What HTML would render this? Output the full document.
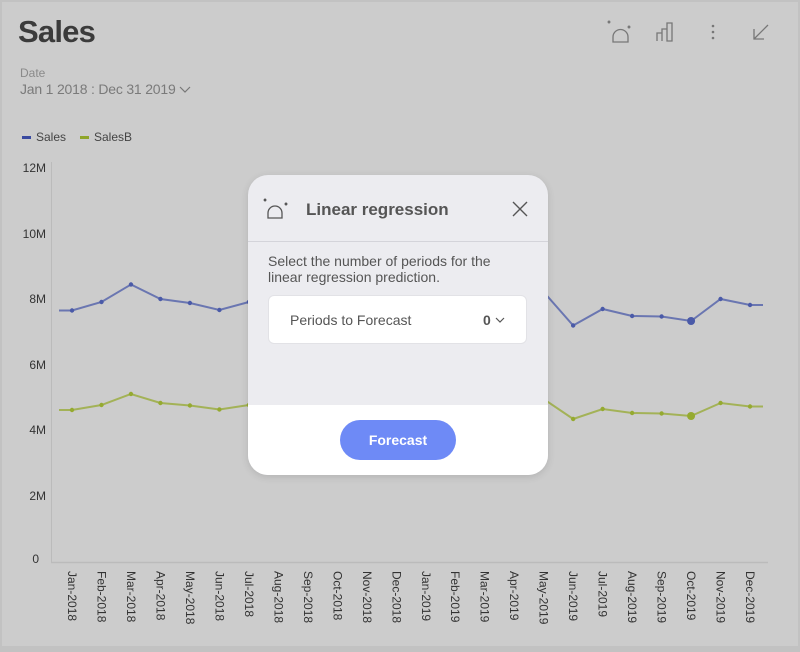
<!DOCTYPE html>
<html><head><meta charset="utf-8"><style>
*{margin:0;padding:0;box-sizing:border-box}
body{width:800px;height:652px;overflow:hidden;background:#cccccc;font-family:"Liberation Sans",Arial,sans-serif;position:relative}
.frame{position:absolute;left:0;top:0;width:800px;height:652px;border:2px solid #c2c2c2;border-bottom-width:6px}
h1{position:absolute;left:18px;top:14px;font-size:31px;font-weight:bold;color:#3b3b3b;letter-spacing:-0.8px}
.dl{position:absolute;left:20px;top:66px;font-size:12px;color:#8a8a8a}
.dv{position:absolute;left:20px;top:81px;font-size:14px;color:#7a7a7a;letter-spacing:-0.2px}
.leg{position:absolute;top:130px;font-size:12px;color:#444}
.dlg{position:absolute;left:248px;top:175px;width:300px;height:300px;border-radius:20px;overflow:hidden;background:#ececf0;box-shadow:0 2px 8px rgba(0,0,0,.12)}
.hd{height:67px;border-bottom:1px solid #d4d4da;position:relative}
.ttl{position:absolute;left:58px;top:25px;font-size:17px;font-weight:bold;color:#555}
.desc{position:absolute;left:20px;top:78px;font-size:14px;color:#555;line-height:16px}
.box{position:absolute;left:20px;top:120px;width:259px;height:49px;background:#fff;border-radius:6px;border:1px solid #e2e2e6}
.box span{position:absolute;top:16px;font-size:14px;color:#555}
.bot{position:absolute;left:0;top:230px;width:300px;height:70px;background:#fff}
.btn{position:absolute;left:92px;top:15px;width:116px;height:40px;border-radius:20px;background:#6e8af6;color:#fff;font-weight:bold;font-size:14px;text-align:center;line-height:40px}
</style></head><body>
<div class="frame"></div>
<h1>Sales</h1>
<div class="dl">Date</div>
<div class="dv">Jan 1 2018 : Dec 31 2019 <svg width="12" height="8" viewBox="0 0 12 8"><path d="M1 1l5 5 5-5" fill="none" stroke="#777" stroke-width="1.2"/></svg></div>
<div class="leg" style="left:22px"><span style="display:inline-block;width:9px;height:3px;background:#3a4aa0;vertical-align:middle;margin-right:5px"></span>Sales</div>
<div class="leg" style="left:80px"><span style="display:inline-block;width:9px;height:3px;background:#8fa52a;vertical-align:middle;margin-right:5px"></span>SalesB</div>
<svg style="position:absolute;left:0;top:0" width="800" height="652">
<g fill="none" stroke="#777" stroke-width="1.3">
<circle cx="609" cy="22" r="0.8"/><circle cx="629" cy="27" r="0.8"/>
<path d="M613 42v-5a7.5 7.5 0 0 1 15 0v5z"/>
<path d="M657 41v-8h5v8M662 41V29h5v12M667 41V23h5v18z"/>
<path d="M768 25l-14 14M754 29v10h10"/>
</g>
<g fill="#777"><circle cx="713" cy="26" r="1.3"/><circle cx="713" cy="32" r="1.3"/><circle cx="713" cy="38" r="1.3"/></g>
<line x1="51.5" y1="162" x2="51.5" y2="563" stroke="#bbb"/>
<line x1="51" y1="562.5" x2="768" y2="562.5" stroke="#bbb" stroke-width="1.5"/>
<g font-size="12" fill="#333" text-anchor="end">
<text x="46" y="172">12M</text><text x="46" y="238">10M</text><text x="46" y="303">8M</text><text x="46" y="369">6M</text><text x="46" y="434">4M</text><text x="46" y="500">2M</text><text x="39" y="563">0</text>
</g>
<g id="ch"></g>
</svg>
<div class="dlg">
<div class="hd">
<svg style="position:absolute;left:14px;top:22px" width="28" height="24"><g fill="none" stroke="#555" stroke-width="1.3"><circle cx="3" cy="3" r="0.8"/><circle cx="24" cy="7" r="0.8"/><path d="M6 21v-5a7 7 0 0 1 14 0v5z"/></g></svg>
<div class="ttl">Linear regression</div>
<svg style="position:absolute;left:264px;top:26px" width="16" height="16"><path d="M1 1l14 14M15 1L1 15" stroke="#555" stroke-width="1.4"/></svg>
</div>
<div class="desc">Select the number of periods for the<br>linear regression prediction.</div>
<div class="box"><span style="left:21px">Periods to Forecast</span><span style="left:214px;font-weight:bold">0</span><svg style="position:absolute;left:226px;top:21px" width="10" height="7"><path d="M1 1l4 4 4-4" fill="none" stroke="#555" stroke-width="1.2"/></svg></div>
<div class="bot"><div class="btn">Forecast</div></div>
</div>
<script>
var m=["Jan","Feb","Mar","Apr","May","Jun","Jul","Aug","Sep","Oct","Nov","Dec"];
var S=[310.5,302,284.5,299,303,310,302,296,300,298,301,297,305,299,296,300,292,325.5,309,316,316.5,321,299,305];
var b=[410,405,394,403,405.5,409.5,405,402,404,403,405,402,407,404,401,404,399,419,409,413,413.5,416,403,406.5];
var h="";
function line(v,c){var p="M59 "+v[0];for(var i=0;i<24;i++){p+=" L"+(72+i*29.48)+" "+v[i];}p+=" L763 "+v[23];h+='<path d="'+p+'" fill="none" stroke="'+c+'" stroke-width="2" opacity="0.75"/>';for(var i=0;i<24;i++){h+='<circle cx="'+(72+i*29.48)+'" cy="'+v[i]+'" r="'+(i==21?4:2.2)+'" fill="'+c+'"/>';}}
line(S,"#4a5aa8");line(b,"#95aa30");
for(var i=0;i<24;i++){var x=72+i*29.48-4;var t=m[i%12]+"-"+(i<12?"2018":"2019");h+='<text transform="translate('+x+',571) rotate(90)" font-size="12" fill="#333">'+t+'</text>';}
document.getElementById("ch").innerHTML=h;
</script>
</body></html>
